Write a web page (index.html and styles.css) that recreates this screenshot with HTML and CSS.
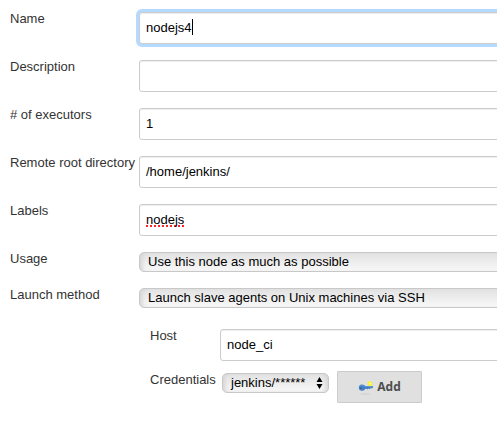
FILE: index.html
```
<!DOCTYPE html>
<html lang="en">
<head>
<meta charset="utf-8">
<title>Node configuration</title>
<link rel="stylesheet" href="styles.css">
</head>
<body>
<main class="form">
  <div class="row"><span class="label">Name</span><div class="field focused"><span class="value">nodejs4</span><span class="caret"></span></div></div>
  <div class="row"><span class="label">Description</span><div class="field"></div></div>
  <div class="row"><span class="label"># of executors</span><div class="field"><span class="value">1</span></div></div>
  <div class="row"><span class="label">Remote root directory</span><div class="field"><span class="value">/home/jenkins/</span></div></div>
  <div class="row"><span class="label">Labels</span><div class="field"><span class="value misspelled">nodejs</span></div></div>
  <div class="row short"><span class="label">Usage</span><div class="select">Use this node as much as possible</div></div>
  <div class="row launch"><span class="label">Launch method</span><div class="select">Launch slave agents on Unix machines via SSH</div></div>
  <section class="nested">
    <div class="subrow host"><span class="label">Host</span><div class="field"><span class="value">node_ci</span></div></div>
    <div class="subrow"><span class="label">Credentials</span>
      <div class="controls">
        <div class="select compact"><span>jenkins/******</span>
          <svg class="arrows" width="7" height="12" viewBox="0 0 7 12"><path d="M3.5 0 6.5 5H.5zM.5 7h6L3.5 12z"/></svg>
        </div>
        <div class="button">
          <svg class="key" width="16" height="16" viewBox="0 0 16 16">
            <ellipse cx="7.5" cy="15" rx="5.5" ry=".6" fill="#cbcbcb"/>
            <path d="M4.2 5.5C2 5.3.8 6.8.8 8.7s1.5 3.2 3.6 3c1.4-.1 2.2-.8 2.7-1.7l1.5-.2.9.6 1-.8 1 .6 1.1-.9h2.2V7L7.1 7C6.5 6 5.6 5.6 4.2 5.5z" fill="#457fc2"/>
            <path d="M1.7 7.7C2.6 6.3 5 6 6.4 7.6l7.6-.1" fill="none" stroke="#6099d8" stroke-width=".8"/>
            <circle cx="2.9" cy="9" r=".7" fill="#254f85"/>
            <path d="m12 1.9.8.8 1.2-.1v1.2l.9.9-.9.9V6.8l-1.2-.1-.8.8-.8-.8-1.2.1V5.6l-.9-.9.9-.9V2.6l1.2.1z" fill="#f8f032"/>
            <circle cx="12" cy="4.7" r=".9" fill="#fffcc0"/>
          </svg>
          <span>Add</span>
        </div>
      </div>
    </div>
  </section>
</main>
</body>
</html>
```
FILE: styles.css
```
* { box-sizing: border-box; }
body {
  margin: 0;
  background: #fff;
  color: #333;
  font: 13px/15px "Liberation Sans", Arial, sans-serif;
  overflow: hidden;
}
.form { width: 520px; padding: 12px 0 0 10px; }
.row { display: grid; grid-template-columns: 129px 1fr; align-items: start; height: 48px; }
.row.short { height: 36px; }
.row.launch { height: 41px; }
.label { margin-top: -1px; white-space: nowrap; }
.field {
  display: flex;
  align-items: center;
  height: 32px;
  padding: 0 6px 2px;
  border: 1px solid #ccc;
  border-radius: 3px;
  background: #fff;
  box-shadow: inset 0 1px 1px #eee;
  color: #000;
}
.focused { box-shadow: 0 0 0 3px #b4daff, inset 0 1px 1px #eee; }
.caret { width: 1px; height: 16px; background: #000; }
.misspelled {
  text-decoration: underline dotted #f22 2px;
  text-underline-offset: 2px;
  text-decoration-skip-ink: none;
}
.select {
  display: flex;
  align-items: center;
  height: 20px;
  padding: 0 8px 2px;
  border: 1px solid #c8c8c8;
  border-radius: 5px;
  background: linear-gradient(#e2e2e2, #f8f8f8);
  box-shadow: inset 4px 0 4px -2px #d4d4d4;
  color: #000;
  white-space: nowrap;
}
.subrow { display: grid; grid-template-columns: 70px 1fr; align-items: start; margin-left: 140px; }
.host { height: 42px; }
.subrow:last-child .label { padding-top: 2px; }
.controls { display: flex; gap: 8px; padding-left: 2px; }
.compact {
  width: 107px;
  margin-top: 2px;
  padding-right: 5px;
  justify-content: space-between;
  box-shadow: inset 4px 0 4px -2px #d4d4d4, inset -4px 0 4px -2px #d4d4d4;
}
.arrows { margin-top: 1px; }
.button {
  display: flex;
  align-items: center;
  justify-content: center;
  gap: 3px;
  width: 85px;
  height: 32px;
  border: 1px solid #ccc;
  border-radius: 1px;
  background: #e0e0e0;
  color: #4d4d4d;
  font: bold 12px/16px "Open Sans", "Noto Sans", sans-serif;
}
```
